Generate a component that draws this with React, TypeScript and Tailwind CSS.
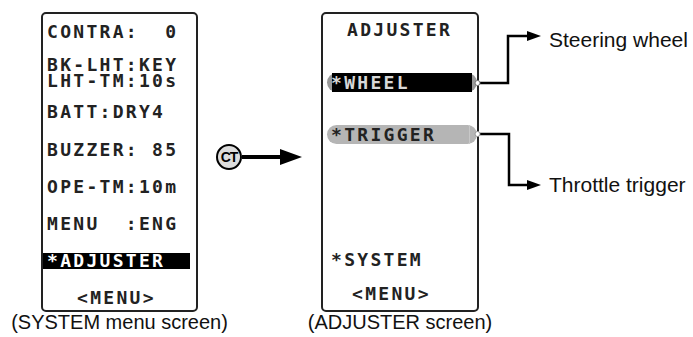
import React from 'react'

// estilo de texto LCD (fuente monoespaciada con espaciado ancho)
const lcd = "font-['DejaVu_Sans_Mono',monospace] font-bold text-[18px] leading-[14px] h-[14px] tracking-[2.3px] whitespace-pre text-[#222]";
const caption = "font-['Liberation_Sans',Arial,sans-serif] text-[20px] leading-[20px] text-[#111] whitespace-nowrap";
const label = "font-['Liberation_Sans',Arial,sans-serif] text-[21px] leading-[24px] text-[#111] whitespace-nowrap";

const App = () => {
  return (
    <div className="w-[693px] h-[337px] bg-white flex items-start overflow-hidden">
      {/* Pantalla SYSTEM */}
      <div className="ml-[41px] mt-[12px] w-[157px] flex flex-col items-center">
        <div className="h-[300px] w-full rounded-[5px] border-2 border-[#222] flex flex-col pl-[4px]">
          <div className={`${lcd} mt-[11px]`}>CONTRA:  0</div>
          <div className={`${lcd} mt-[18px] h-[32px] leading-[16px]`}>{'BK-LHT:KEY\nLHT-TM:10s'}</div>
          <div className={`${lcd} mt-[16px]`}>BATT:DRY4</div>
          <div className={`${lcd} mt-[24px]`}>BUZZER: 85</div>
          <div className={`${lcd} mt-[23px]`}>OPE-TM:10m</div>
          <div className={`${lcd} mt-[23px]`}>MENU  :ENG</div>
          <div className="mt-[22px] -ml-[4px] w-[147px] h-[16px] bg-black flex items-center pl-[4px]">
            <div className={`${lcd} text-white`}>*ADJUSTER</div>
          </div>
          <div className={`${lcd} mt-[22px] ml-[30px]`}>&lt;MENU&gt;</div>
        </div>
        <div className={caption}>(SYSTEM menu screen)</div>
      </div>

      {/* CT -> */}
      <div className="ml-[18px] mt-[144px] flex items-center">
        <div className="w-[26px] h-[26px] rounded-full border-2 border-black bg-[#dcdcdc] flex items-center justify-center">
          <span className="font-['Liberation_Sans',Arial,sans-serif] font-bold text-[14px] leading-none tracking-[-1px] text-black">CT</span>
        </div>
        <svg width="60" height="20" viewBox="0 0 60 20" className="block">
          <rect x="0" y="8" width="42" height="4" fill="#000" />
          <polygon points="38,2 60,10 38,18" fill="#000" />
        </svg>
      </div>

      {/* Pantalla ADJUSTER */}
      <div className="ml-[19px] mt-[12px] w-[158px] flex flex-col items-center">
        <div className="h-[300px] w-full rounded-[5px] border-2 border-[#222] flex flex-col">
          <div className={`${lcd} mt-[9px] ml-[24px]`}>ADJUSTER</div>
          <div className="mt-[36px] ml-[4px] h-[19px] rounded-full bg-[#9a9a9a] flex items-center px-[5px]">
            <div className="h-full flex-1 bg-black flex items-center">
              <div className={`${lcd} text-[#d8d8d8] -ml-[1px]`}>*WHEEL</div>
            </div>
          </div>
          <div className="mt-[33px] ml-[4px] h-[19px] rounded-full bg-[#b5b5b5] flex items-center pl-[4px] pr-[7px]">
            <div className={`${lcd} flex-1`}>*TRIGGER</div>
            <div className="w-[1px] h-full bg-[#c8c8c8]" />
          </div>
          <div className={`${lcd} mt-[109px] ml-[8px]`}>*SYSTEM</div>
          <div className={`${lcd} mt-[20px] ml-[29px]`}>&lt;MENU&gt;</div>
        </div>
        <div className={caption}>(ADJUSTER screen)</div>
      </div>

      {/* líneas de llamada */}
      <svg width="74" height="200" viewBox="0 0 74 200" className="block -ml-[6px] shrink-0">
        <path d="M7 83 H35 V36 H56" fill="none" stroke="#000" strokeWidth="2.5" />
        <polygon points="54,31 68,36 54,41" fill="#000" />
        <path d="M7 134 H36 V185 H56" fill="none" stroke="#000" strokeWidth="2.5" />
        <polygon points="54,180 68,185 54,190" fill="#000" />
        <circle cx="4.5" cy="83" r="2.5" fill="#fff" stroke="#777" strokeWidth="1" />
        <circle cx="4.5" cy="134" r="2.5" fill="#fff" stroke="#999" strokeWidth="1" />
      </svg>

      <div className="ml-[2px] mt-[28px] flex flex-col">
        <div className={label}>Steering wheel</div>
        <div className={`${label} mt-[121px]`}>Throttle trigger</div>
      </div>
    </div>
  )
}

export default App
